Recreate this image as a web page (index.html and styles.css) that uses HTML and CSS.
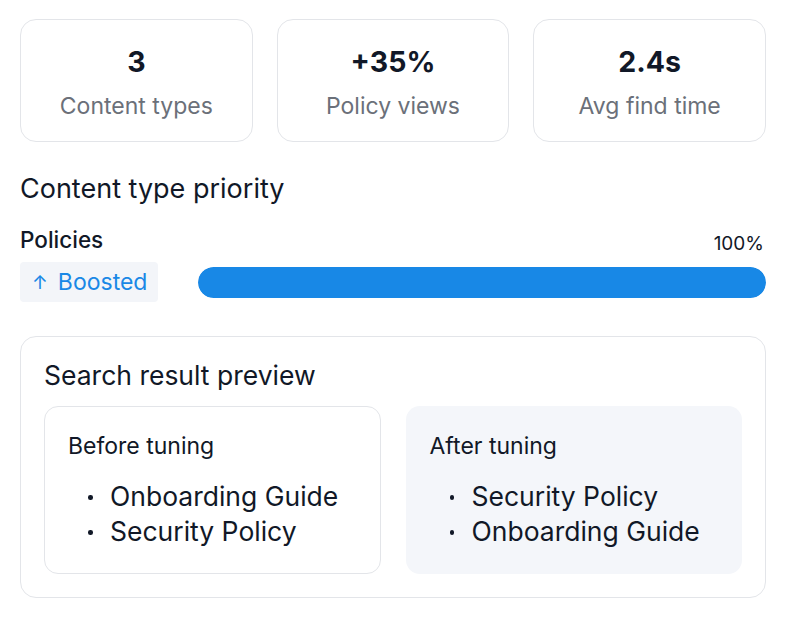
FILE: index.html
```html
<!DOCTYPE html>
<html>
<head>
<meta charset="utf-8">
<link rel="stylesheet" href="styles.css">
</head>
<body>
<div class="page">
  <div class="stats">
    <div class="stat"><div class="stat-value">3</div><div class="stat-label">Content types</div></div>
    <div class="stat"><div class="stat-value">+35%</div><div class="stat-label">Policy views</div></div>
    <div class="stat"><div class="stat-value">2.4s</div><div class="stat-label">Avg find time</div></div>
  </div>

  <h2 class="section-title">Content type priority</h2>

  <div class="priority">
    <div class="priority-head">
      <span class="priority-name">Policies</span>
      <span class="priority-pct">100%</span>
    </div>
    <div class="priority-row">
      <span class="badge"><span class="arrow">↑</span>Boosted</span>
      <div class="track"><div class="fill" style="width:100%"></div></div>
    </div>
  </div>

  <div class="preview">
    <h2 class="preview-title">Search result preview</h2>
    <div class="compare">
      <div class="col col-before">
        <div class="col-title">Before tuning</div>
        <ul class="results">
          <li>Onboarding Guide</li>
          <li>Security Policy</li>
        </ul>
      </div>
      <div class="col col-after">
        <div class="col-title">After tuning</div>
        <ul class="results">
          <li>Security Policy</li>
          <li>Onboarding Guide</li>
        </ul>
      </div>
    </div>
  </div>
</div>
</body>
</html>
```

FILE: styles.css
```css
* { box-sizing: border-box; }
html, body { margin: 0; padding: 0; background: #ffffff; }
body {
  font-family: "Inter", "Noto Sans", sans-serif;
  color: #111827;
}
.page { padding: 19px 20px 20px; width: 786px; }

.stats {
  display: grid;
  grid-template-columns: repeat(3, 1fr);
  gap: 24px;
}
.stat {
  border: 1px solid #e3e5e9;
  border-radius: 16px;
  height: 123px;
  padding-top: 22px;
  text-align: center;
}
.stat-value {
  font-size: 28.5px;
  font-weight: 700;
  line-height: 40px;
  color: #111827;
}
.stat-label {
  margin-top: 10px;
  font-size: 23px;
  line-height: 28px;
  color: #6b7079;
}

.section-title {
  margin: 31px 0 0;
  font-size: 27px;
  font-weight: 400;
  line-height: 32px;
}

.priority { margin-top: 21px; }
.priority-head {
  display: flex;
  justify-content: space-between;
  align-items: flex-end;
}
.priority-name { font-size: 22.5px; line-height: 28px; font-weight: 500; }
.priority-pct { font-size: 19px; line-height: 24px; position: relative; top: 2px; padding-right: 2px; }
.priority-row {
  margin-top: 8px;
  display: flex;
  align-items: center;
  gap: 40px;
}
.badge {
  display: inline-flex;
  align-items: center;
  gap: 10px;
  height: 40px;
  width: 138px;
  padding: 0 12px;
  background: #f3f5f9;
  border-radius: 4px;
  color: #1a88e6;
  font-size: 23px;
  white-space: nowrap;
}
.arrow { font-size: 19px; }
.track {
  flex: 1;
  height: 31px;
  border-radius: 16px;
  background: #e8edf3;
  overflow: hidden;
}
.fill { height: 100%; background: #1888e6; border-radius: 16px; }

.preview {
  margin-top: 34px;
  border: 1px solid #e3e5e9;
  border-radius: 16px;
  padding: 22px 23px 23px;
}
.preview-title {
  margin: 0;
  font-size: 26.5px;
  font-weight: 400;
  line-height: 32px;
}
.compare {
  margin-top: 15px;
  display: grid;
  grid-template-columns: 1fr 1fr;
  gap: 25px;
}
.col {
  border-radius: 14px;
  padding: 24px 24px 23px;
  height: 168px;
}
.col-before { border: 1px solid #e3e5e9; padding: 23px; }
.col-after { background: #f4f6fa; }
.col-title { font-size: 23px; line-height: 32px; }
.results {
  list-style: none;
  margin: 17px 0 0;
  padding: 0 0 0 42px;
}
.results li {
  position: relative;
  font-size: 26.5px;
  line-height: 35px;
  white-space: nowrap;
}
.results li::before {
  content: "";
  position: absolute;
  left: -22px;
  top: 16px;
  width: 4.5px;
  height: 4.5px;
  border-radius: 50%;
  background: #111827;
}
```
